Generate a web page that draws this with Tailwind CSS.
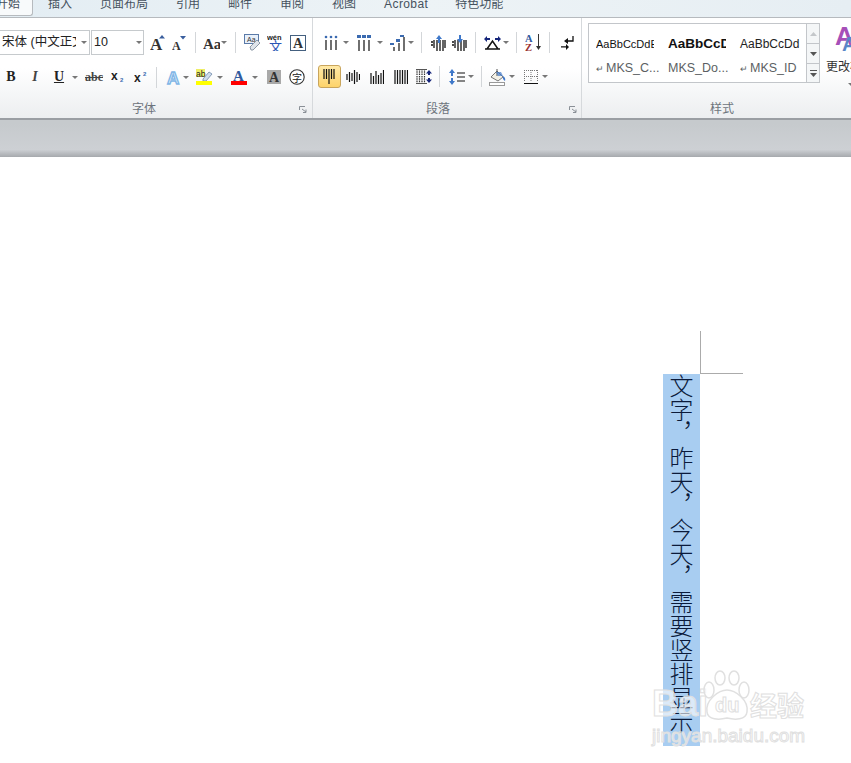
<!DOCTYPE html>
<html lang="zh">
<head>
    <meta charset="UTF-8">
    <title>Word 竖排文字</title>
    <script src="https://cdn.jsdelivr.net/npm/@tailwindcss/browser@4"></script>
</head>
<body class="relative h-[763px] w-[851px] overflow-hidden bg-white font-['Liberation_Sans','Noto_Sans_CJK_SC',sans-serif]">
    <!-- tabs -->
    <div class="flex h-[18px] overflow-hidden border-b border-[#b6babe] bg-linear-to-r from-[#e3edf3] via-[#edf3f6] to-[#e6eef3] text-[12px] leading-[12px] text-[#46525e]">
        <div class="h-[18px] w-[33px] shrink-0 rounded-br-[3px] border-r border-b border-[#b6babe] bg-[#f8fafb] pl-0 -mt-[2px]"><span class="-ml-[4px] block w-[30px] whitespace-nowrap">开始</span></div>
        <span class="ml-[15px] -mt-[2px] whitespace-nowrap">插入</span>
        <span class="ml-[28px] -mt-[2px] whitespace-nowrap">页面布局</span>
        <span class="ml-[28px] -mt-[2px] whitespace-nowrap">引用</span>
        <span class="ml-[28px] -mt-[2px] whitespace-nowrap">邮件</span>
        <span class="ml-[28px] -mt-[2px] whitespace-nowrap">审阅</span>
        <span class="ml-[28px] -mt-[2px] whitespace-nowrap">视图</span>
        <span class="ml-[28px] -mt-[2px] whitespace-nowrap tracking-[0.4px]">Acrobat</span>
        <span class="ml-[27px] -mt-[2px] whitespace-nowrap">特色功能</span>
    </div>

    <!-- ribbon -->
    <div class="flex h-[102px] border-b-2 border-[#9a9ea3] bg-linear-to-b from-white from-50% to-[#eceef0]">

        <!-- 字体 -->
        <div class="flex w-[313px] shrink-0 flex-col border-r border-[#d6d9dc] pt-[12px]">
            <div class="flex h-[25px] items-center">
                <div class="flex h-[25px] w-[90px] shrink-0 items-center overflow-hidden border border-l-0 border-[#c6cacd] bg-white pl-[2px] text-[12.5px] text-[#222]">
                    <span class="w-[74px] overflow-hidden whitespace-nowrap">宋体 (中文正文)</span>
                    <svg class="ml-[5px] shrink-0" width="6" height="3" viewBox="0 0 6 3"><path d="M0 0h6L3 3z" fill="#777"/></svg>
                </div>
                <div class="ml-[1px] flex h-[25px] w-[53px] shrink-0 items-center border border-[#c6cacd] bg-white pl-[2px] text-[12.5px] text-[#222]">
                    <span class="w-[42px]">10</span>
                    <svg class="shrink-0" width="6" height="3" viewBox="0 0 6 3"><path d="M0 0h6L3 3z" fill="#777"/></svg>
                </div>
                <svg class="ml-[6px] shrink-0" width="16" height="16" viewBox="0 0 16 16"><text x="0" y="15" font-family="Liberation Serif" font-weight="700" font-size="17" fill="#333">A</text><path d="M9 3.500 12 0l3 3.500z" fill="#3a5f9e"/></svg>
                <svg class="ml-[6px] shrink-0" width="14" height="16" viewBox="0 0 14 16"><text x="0" y="15" font-family="Liberation Serif" font-weight="700" font-size="12" fill="#333">A</text><path d="M8 1h6l-3 3.500z" fill="#3a5f9e"/></svg>
                <i class="ml-[9px] block h-[21px] w-px shrink-0 bg-[#d3d6d9]"></i>
                <svg class="ml-[7px] shrink-0" width="17" height="14" viewBox="0 0 17 14"><text x="0" y="13" font-family="Liberation Serif" font-weight="700" font-size="15" fill="#333">Aa</text></svg>
                <svg class="ml-px shrink-0" width="6" height="3" viewBox="0 0 6 3"><path d="M0 0h6L3 3z" fill="#777"/></svg>
                <i class="ml-[8px] block h-[21px] w-px shrink-0 bg-[#d3d6d9]"></i>
                <svg class="ml-[8px] shrink-0" width="17" height="17" viewBox="0 0 17 17"><rect x=".5" y=".5" width="14" height="9" fill="#e8f0fa" stroke="#5a7aa8"/><text x="3" y="8" font-family="Liberation Sans" font-size="7" fill="#333">Aa</text><path d="m6 13 7-7 3 3-7 7H7z" fill="#dfe4ea" stroke="#8c98a6"/></svg>
                <svg class="ml-[6px] shrink-0" width="17" height="17" viewBox="0 0 17 17"><text x="0" y="6" font-family="Liberation Sans" font-weight="700" font-size="7.500" fill="#222">wén</text><text x="2" y="17" font-family="Noto Sans CJK SC" font-size="13" fill="#2a55b5">文</text></svg>
                <svg class="ml-[6px] shrink-0" width="16" height="16" viewBox="0 0 16 16"><rect x=".5" y=".5" width="15" height="15" fill="#fff" stroke="#44607f"/><text x="3" y="13" font-family="Liberation Serif" font-weight="700" font-size="14" fill="#333">A</text></svg>
            </div>
            <div class="mt-[11px] flex h-[22px] items-center">
                <b class="ml-[5px] w-[12px] shrink-0 text-center font-['Liberation_Serif',serif] text-[14px] leading-none text-[#222]">B</b>
                <i class="ml-[12px] w-[12px] shrink-0 text-center font-['Liberation_Serif',serif] text-[14px] leading-none font-bold text-[#444]">I</i>
                <b class="ml-[12px] w-[12px] shrink-0 text-center font-['Liberation_Serif',serif] text-[14px] leading-none text-[#222] underline">U</b>
                <svg class="ml-[7px] shrink-0" width="6" height="3" viewBox="0 0 6 3"><path d="M0 0h6L3 3z" fill="#777"/></svg>
                <span class="ml-[7px] w-[18px] shrink-0 text-center font-['Liberation_Serif',serif] text-[12px] leading-none font-bold text-[#444] line-through">abc</span>
                <svg class="ml-[8px] shrink-0" width="15" height="12" viewBox="0 0 15 12"><text x="0" y="9" font-family="Liberation Sans" font-weight="700" font-size="12" fill="#222">x</text><text x="9" y="11" font-family="Liberation Sans" font-weight="700" font-size="6" fill="#3a6ab0">2</text></svg>
                <svg class="ml-[8px] shrink-0" width="15" height="12" viewBox="0 0 15 12"><text x="0" y="11" font-family="Liberation Sans" font-weight="700" font-size="12" fill="#222">x</text><text x="9" y="5" font-family="Liberation Sans" font-weight="700" font-size="6" fill="#3a6ab0">2</text></svg>
                <i class="ml-[7px] block h-[21px] w-px shrink-0 bg-[#d3d6d9]"></i>
                <svg class="ml-[8px] shrink-0" width="18" height="18" viewBox="0 0 18 18"><text x="2" y="15.500" font-family="Liberation Sans" font-weight="700" font-size="17" fill="#dcebf9" stroke="#7fb6e6" stroke-width="1.300">A</text></svg>
                <svg class="shrink-0" width="6" height="3" viewBox="0 0 6 3"><path d="M0 0h6L3 3z" fill="#777"/></svg>
                <svg class="ml-[7px] shrink-0" width="17" height="16" viewBox="0 0 17 16"><rect x="0" y="0" width="9" height="8" fill="#eeee66"/><text x="0" y="7.500" font-family="Liberation Sans" font-size="8.500" fill="#222">ab</text><path d="m7 10 6-7 3 2-6 7H7z" fill="#cfdcec" stroke="#6f89aa" stroke-width=".8"/><rect y="12" width="16" height="4" fill="#ffff00"/></svg>
                <svg class="ml-[4px] shrink-0" width="6" height="3" viewBox="0 0 6 3"><path d="M0 0h6L3 3z" fill="#777"/></svg>
                <svg class="ml-[8px] shrink-0" width="16" height="16" viewBox="0 0 16 16"><text x="2" y="12" font-family="Liberation Serif" font-weight="700" font-size="15" fill="#2f5a9e">A</text><rect y="12" width="16" height="4" fill="#ff0000"/></svg>
                <svg class="ml-[5px] shrink-0" width="6" height="3" viewBox="0 0 6 3"><path d="M0 0h6L3 3z" fill="#777"/></svg>
                <svg class="ml-[9px] shrink-0" width="14" height="14" viewBox="0 0 14 14"><rect width="14" height="14" fill="#a9a9a9"/><text x="2" y="12" font-family="Liberation Serif" font-weight="700" font-size="14" fill="#333">A</text></svg>
                <svg class="ml-[8px] shrink-0" width="16" height="16" viewBox="0 0 16 16"><circle cx="8" cy="8" r="7.200" fill="#fff" stroke="#333" stroke-width="1.100"/><text x="3" y="12.500" font-family="Noto Sans CJK SC" font-size="10" fill="#222">字</text></svg>
            </div>
            <div class="mt-auto flex h-[20px] items-center pt-[2px] pl-[132px] text-[12px] text-[#6d747c]">
                <span class="w-[167px]">字体</span>
                <svg width="8" height="7" viewBox="0 0 8 7"><path d="M.5 4V.5H6M3 3l4 3M7 3.500V6.500H4" fill="none" stroke="#8a9097"/></svg>
            </div>
        </div>

        <!-- 段落 -->
        <div class="flex w-[269px] shrink-0 flex-col border-r border-[#d6d9dc] pt-[12px]">
            <div class="flex h-[25px] items-center">
                <svg class="ml-[11px] shrink-0" width="14" height="15" viewBox="0 0 14 15"><path d="M2 5v10M7 5v10M12 5v10" stroke="#111" stroke-width="1.200"/><circle cx="2" cy="2" r="1.300" fill="#3a6ab0"/><circle cx="7" cy="2" r="1.300" fill="#3a6ab0"/><circle cx="12" cy="2" r="1.300" fill="#3a6ab0"/></svg>
                <svg class="ml-[5px] shrink-0" width="6" height="3" viewBox="0 0 6 3"><path d="M0 0h6L3 3z" fill="#777"/></svg>
                <svg class="ml-[8px] shrink-0" width="14" height="16" viewBox="0 0 14 16"><path d="M2 5v11M7 5v11M12 5v11" stroke="#111" stroke-width="1.200"/><path d="M0 0h4v3H0zM5 0h4v3H5zM10 0h4v3h-4z" fill="#3a6ab0"/></svg>
                <svg class="ml-[6px] shrink-0" width="6" height="3" viewBox="0 0 6 3"><path d="M0 0h6L3 3z" fill="#777"/></svg>
                <svg class="ml-[7px] shrink-0" width="15" height="16" viewBox="0 0 15 16"><path d="M14 2v14M9 8v8M4 12v4" stroke="#111" stroke-width="1.200"/><path d="M10 0h4v2h-4zM6 4h4v3H6zM0 8h4v2H0z" fill="#3a6ab0"/></svg>
                <svg class="ml-[3px] shrink-0" width="6" height="3" viewBox="0 0 6 3"><path d="M0 0h6L3 3z" fill="#777"/></svg>
                <i class="ml-[7px] block h-[21px] w-px shrink-0 bg-[#d3d6d9]"></i>
                <svg class="ml-[9px] shrink-0" width="16" height="16" viewBox="0 0 16 16"><path d="M0 7h2M0 10h2M3 5v8M6 5v11M9 5v11M12 5v11M14 5v8" stroke="#111" stroke-width="1.300"/><path d="m8 0 3 4H9v4H7V4H5z" fill="#3f78c9"/></svg>
                <svg class="ml-[5px] shrink-0" width="16" height="16" viewBox="0 0 16 16"><path d="M0 7h2M0 10h2M3 5v8M6 5v11M9 5v11M12 5v11M14 5v8" stroke="#111" stroke-width="1.300"/><path d="m8 8 3-4H9V0H7v4H5z" fill="#3f78c9"/></svg>
                <i class="ml-[7px] block h-[21px] w-px shrink-0 bg-[#d3d6d9]"></i>
                <svg class="ml-[8px] shrink-0" width="17" height="14" viewBox="0 0 17 14"><path d="M1 13h15M3 13 8.500 5 14 13" fill="none" stroke="#111" stroke-width="1.500"/><path d="M0 3 3 0v2h3v2H3v2zM17 3l-3-3v2h-3v2h3v2z" fill="#15257a"/></svg>
                <svg class="ml-[2px] shrink-0" width="6" height="3" viewBox="0 0 6 3"><path d="M0 0h6L3 3z" fill="#777"/></svg>
                <i class="ml-[7px] block h-[21px] w-px shrink-0 bg-[#d3d6d9]"></i>
                <svg class="ml-[8px] shrink-0" width="17" height="17" viewBox="0 0 17 17"><text x="0" y="8" font-family="Liberation Serif" font-weight="700" font-size="10.500" fill="#2f5a9e">A</text><text x="0" y="16.500" font-family="Liberation Serif" font-weight="700" font-size="10.500" fill="#9a3232">Z</text><path d="M13.500 0v13" stroke="#333"/><path d="m11 12 2.500 4 2.500-4z" fill="#333"/></svg>
                <i class="ml-[7px] block h-[21px] w-px shrink-0 bg-[#d3d6d9]"></i>
                <svg class="ml-[11px] shrink-0" width="13" height="14" viewBox="0 0 13 14"><path d="M12 0v5H6" fill="none" stroke="#111" stroke-width="1.300"/><path d="M3 5l4-3v6zM5 11.500H0v-1.200h5V8l3 2.900L5 14z" fill="#111"/></svg>
            </div>
            <div class="mt-[10px] flex h-[23px] items-center">
                <div class="ml-[5px] flex h-[23px] w-[23px] shrink-0 items-center justify-center rounded-[3px] border border-[#c9a55c] bg-linear-to-b from-[#ffe9a6] to-[#fdd36a]">
                    <svg width="13" height="15" viewBox="0 0 13 15"><path d="M1 0v10M3.500 0v10M6 0v15M8.500 0v10M11 0v10" stroke="#111" stroke-width="1.200"/></svg>
                </div>
                <svg class="ml-[5px] shrink-0" width="14" height="14" viewBox="0 0 14 14"><path d="M1 4v6M3.500 2v10M6 3v8M8.500 0v14M11 2v10M13.500 4v6" stroke="#111" stroke-width="1.200"/></svg>
                <svg class="ml-[10px] shrink-0" width="14" height="14" viewBox="0 0 14 14"><path d="M1 3v11M3.500 6v8M6 1v13M8.500 5v9M11 3v11M13.500 0v14" stroke="#111" stroke-width="1.200"/></svg>
                <svg class="ml-[10px] shrink-0" width="14" height="14" viewBox="0 0 14 14"><path d="M1 0v14M3.500 0v14M6 0v14M8.500 0v14M11 0v14M13.500 0v14" stroke="#111" stroke-width="1.200"/></svg>
                <svg class="ml-[8px] shrink-0" width="16" height="15" viewBox="0 0 16 15"><path d="M1 0v15M3.500 0v15M6 0v15M8.500 0v15" stroke="#333" stroke-width="1.200" stroke-dasharray="1.500 .8"/><path d="M0 .5h11M0 14.500h11" stroke="#555"/><path d="m13 1 3 3.500h-2V6h-2V4.500h-2zM13 14l3-3.500h-2V9h-2v1.500h-2z" fill="#15257a"/></svg>
                <i class="ml-[7px] block h-[21px] w-px shrink-0 bg-[#d3d6d9]"></i>
                <svg class="ml-[9px] shrink-0" width="16" height="16" viewBox="0 0 16 16"><path d="M8 4h8M8 8h8M8 12h8" stroke="#111" stroke-width="1.200"/><path d="m3 0 3 4H4v3H2V4H0zM3 16l3-4H4V9H2v3H0z" fill="#3f78c9"/></svg>
                <svg class="ml-[3px] shrink-0" width="6" height="3" viewBox="0 0 6 3"><path d="M0 0h6L3 3z" fill="#777"/></svg>
                <i class="ml-[7px] block h-[21px] w-px shrink-0 bg-[#d3d6d9]"></i>
                <svg class="ml-[7px] shrink-0" width="18" height="18" viewBox="0 0 18 18"><path d="m2 9 6-6 6 6-5 4z" fill="#f4f1e6" stroke="#777"/><path d="M8 1v7" stroke="#555"/><path d="M14 8q3 2 2 5-3-2-2-5z" fill="#3f78c9"/><path d="M7 4h5l2 4H9z" fill="#3f78c9" opacity=".7"/><rect x=".5" y="14.500" width="15" height="3" fill="#fff" stroke="#999"/></svg>
                <svg class="ml-[2px] shrink-0" width="6" height="3" viewBox="0 0 6 3"><path d="M0 0h6L3 3z" fill="#777"/></svg>
                <svg class="ml-[9px] shrink-0" width="14" height="14" viewBox="0 0 14 14"><path d="M.5 0v12M7 0v12M13.500 0v12M0 .5h14M0 6.500h14" stroke="#777" stroke-dasharray="1 1"/><path d="M0 13.500h14" stroke="#111"/></svg>
                <svg class="ml-[4px] shrink-0" width="6" height="3" viewBox="0 0 6 3"><path d="M0 0h6L3 3z" fill="#777"/></svg>
            </div>
            <div class="mt-auto flex h-[20px] items-center pt-[2px] pl-[113px] text-[12px] text-[#6d747c]">
                <span class="w-[143px]">段落</span>
                <svg width="8" height="7" viewBox="0 0 8 7"><path d="M.5 4V.5H6M3 3l4 3M7 3.500V6.500H4" fill="none" stroke="#8a9097"/></svg>
            </div>
        </div>

        <!-- 样式 -->
        <div class="flex min-w-0 flex-1 flex-col overflow-hidden pt-[5px]">
            <div class="flex h-[60px]">
                <div class="ml-[6px] grid h-[60px] w-[219px] shrink-0 grid-cols-[72px_72px_1fr] grid-rows-[29px_1fr] border border-[#c3c6ca] bg-white pl-[7px] text-[12.5px] whitespace-nowrap text-[#5c5f63]">
                    <span class="w-[58px] self-end overflow-hidden text-[11px] leading-[18px] text-[#111]">AaBbCcDdEe</span>
                    <span class="w-[58px] self-end overflow-hidden text-[13.5px] leading-[18px] font-bold text-[#111]">AaBbCcDd</span>
                    <span class="self-end text-[12px] leading-[18px] text-[#222]">AaBbCcDd</span>
                    <span class="leading-[31px]"><span class="mr-[2px] text-[9px]">↵</span>MKS_C...</span>
                    <span class="leading-[31px]">MKS_Do...</span>
                    <span class="leading-[31px]"><span class="mr-[2px] text-[9px]">↵</span>MKS_ID</span>
                </div>
                <div class="flex h-[60px] w-[13px] shrink-0 flex-col border border-l-0 border-[#c3c6ca] bg-[#f4f6f7]">
                    <div class="flex h-[20px] items-center justify-center border-b border-[#c3c6ca]"><svg width="7" height="4" viewBox="0 0 7 4"><path d="M0 4h7L3.500 0z" fill="#c4c7ca"/></svg></div>
                    <div class="flex h-[20px] items-center justify-center border-b border-[#c3c6ca]"><svg width="7" height="4" viewBox="0 0 7 4"><path d="M0 0h7L3.500 4z" fill="#555"/></svg></div>
                    <div class="flex flex-1 items-center justify-center"><svg width="7" height="7" viewBox="0 0 7 7"><path d="M0 .5h7" stroke="#555"/><path d="M0 3h7L3.500 7z" fill="#555"/></svg></div>
                </div>
                <div class="ml-[6px] flex w-[30px] shrink-0 flex-col text-[12px] leading-[14px] whitespace-nowrap text-[#333]">
                    <svg class="ml-[9px] shrink-0" width="22" height="28" viewBox="0 0 22 28"><text x="0" y="22" font-family="Liberation Sans" font-weight="700" font-size="26" fill="#a64fb8">A</text><text x="7" y="28" font-family="Liberation Sans" font-weight="700" font-size="20" fill="#5a86c8">A</text></svg>
                    <span class="mt-[9px]">更改样式</span>
                    <svg class="mt-[9px] ml-[22px] shrink-0" width="6" height="3" viewBox="0 0 6 3"><path d="M0 0h6L3 3z" fill="#777"/></svg>
                </div>
            </div>
            <div class="mt-auto flex h-[20px] items-center pt-[2px] pl-[128px] text-[12px] text-[#6d747c]">样式</div>
        </div>
    </div>

    <!-- 灰色分隔带 -->
    <div class="h-[37px] bg-linear-to-b from-[#c6cacd] from-10% via-[#cdd0d4] via-80% to-[#a6a9ad]"></div>

    <!-- 文档 -->
    <div class="pt-[174px]">
        <div class="ml-[700px] h-[43px] w-[43px] border-b border-l border-[#ababab]"></div>
        <div class="ml-[663px] h-[372px] w-[37px] overflow-hidden bg-[#a8cdf1] pr-[3px] font-['Noto_Sans_CJK_SC',sans-serif] text-[24px] leading-[31px] font-light text-[#0b1a3a] [writing-mode:vertical-rl]">文字，昨天，今天，需要竖排显示</div>
    </div>

    <!-- 百度经验水印 -->
    <div class="absolute top-[670px] left-[650px] h-[76px] w-[156px] text-white/60 [-webkit-text-stroke:1px_#e0e0e0]">
        <span class="absolute top-[14px] left-[2px] font-['Liberation_Sans',sans-serif] text-[36px] leading-[40px] font-bold">Bai</span>
        <svg class="absolute top-0 left-[53px]" width="50" height="52" viewBox="0 0 50 52"><g fill="#fff" fill-opacity=".55" stroke="#e0e0e0" stroke-width="1.500"><ellipse cx="6" cy="20" rx="5" ry="8"/><ellipse cx="17" cy="8" rx="5" ry="7"/><ellipse cx="31" cy="8" rx="5" ry="7"/><ellipse cx="41" cy="20" rx="5" ry="8"/><path d="M24 20c8 0 22 10 20 22-1 8-12 8-20 6-8 2-19 2-20-6-2-12 12-22 20-22z"/></g></svg>
        <span class="absolute top-[24px] left-[65px] font-['Liberation_Sans',sans-serif] text-[20px] leading-[22px] font-bold">du</span>
        <span class="absolute top-[21px] left-[100px] text-[27px] leading-[32px] font-bold whitespace-nowrap">经验</span>
        <span class="absolute top-[56px] left-[2px] font-['Liberation_Sans',sans-serif] text-[19px] leading-[20px] whitespace-nowrap">jingyan.baidu.com</span>
    </div>
</body>
</html>
